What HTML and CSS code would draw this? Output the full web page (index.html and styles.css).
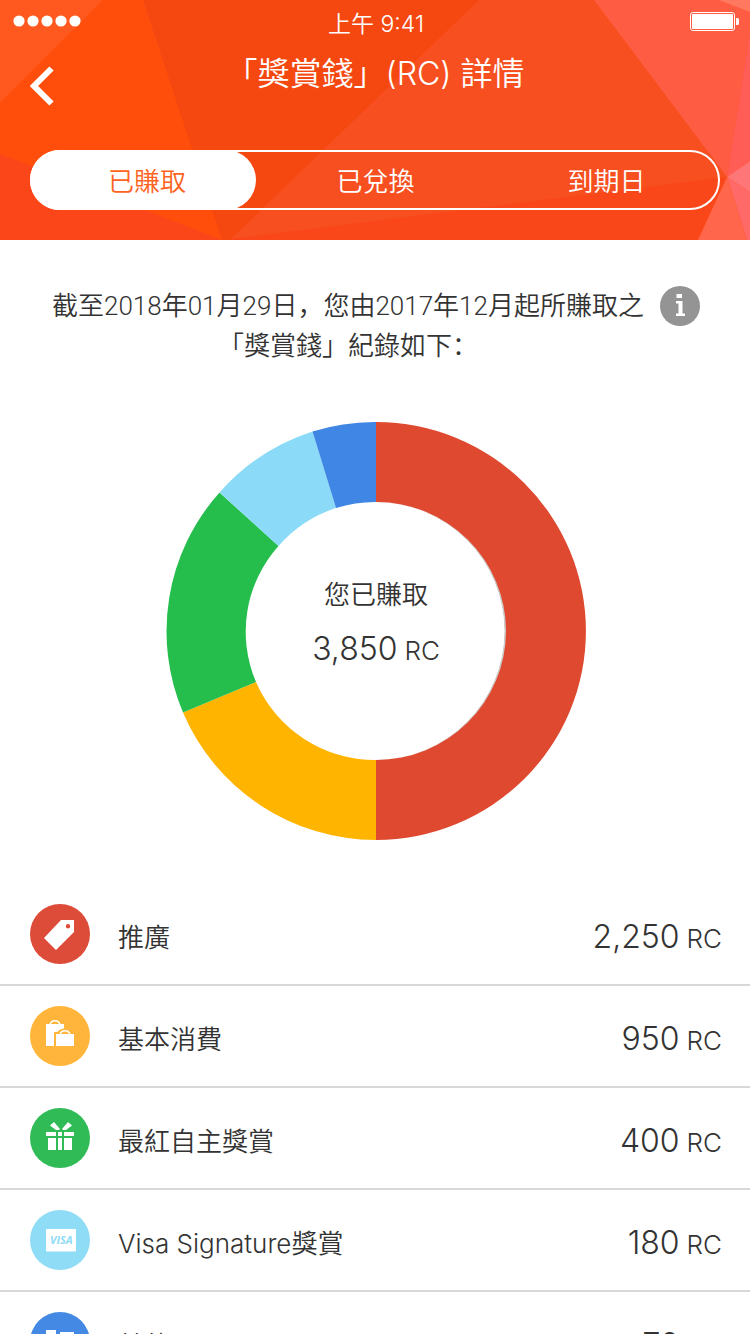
FILE: index.html
```html
<!DOCTYPE html>
<html lang="zh-Hant-HK">
<head>
<meta charset="utf-8">
<meta name="viewport" content="width=device-width, initial-scale=1">
<title>「獎賞錢」(RC) 詳情</title>
<link rel="stylesheet" href="styles.css">
</head>
<body>
<header class="header">
  <svg class="header-art" viewBox="0 0 750 240" preserveAspectRatio="none" aria-hidden="true">
    <rect width="750" height="240" fill="#ff4e0c"/>
    <path d="M0 0H103L0 103Z" fill="#ff591f"/>
    <path d="M0 154L222 240H0Z" fill="#fb4619"/>
    <path d="M143 0H479L230 240H222Z" fill="#f54811"/>
    <path d="M479 0H594L727 177L230 240Z" fill="#f74f20"/>
    <path d="M727 177L698 240H230V239Z" fill="#fa471a"/>
    <path d="M594 0H750V30L727 177Z" fill="#ff5c44"/>
    <path d="M719 0H750V12Z" fill="#ff7860"/>
    <path d="M750 30V161L727 177Z" fill="#ff5d55"/>
    <path d="M750 161V192L727 177Z" fill="#ff7678"/>
    <path d="M727 177L750 192V240H747Z" fill="#ff6a68"/>
    <path d="M727 177L747 240H698Z" fill="#ff664b"/>
  </svg>
  <div class="status">
    <svg class="signal" viewBox="0 0 68 12" fill="#fff" aria-hidden="true"><circle cx="6" cy="6" r="5.6"/><circle cx="20" cy="6" r="5.6"/><circle cx="34" cy="6" r="5.6"/><circle cx="48" cy="6" r="5.6"/><circle cx="62" cy="6" r="5.6"/></svg>
    <span class="time">上午 9:41</span>
    <svg class="battery" viewBox="0 0 49 19" fill="#fff" aria-hidden="true"><rect x=".5" y=".5" width="44" height="18" rx="2.5" fill="none" stroke="#fff"/><rect x="2" y="2" width="41" height="15" rx="1"/><path d="M46 6h1.500q1.500 0 1.500 1.500v4q0 1.500-1.500 1.500H46z"/></svg>
  </div>
  <div class="titlebar">
    <button class="back" type="button" aria-label="返回"><svg viewBox="0 0 24 40" aria-hidden="true"><path d="M21.500 2.500L4 20L21.500 37.500" fill="none" stroke="#fff" stroke-width="6"/></svg></button>
    <h1 class="title">「獎賞錢」(RC) 詳情</h1>
  </div>
  <nav class="tabs">
    <button class="tab tab-active" type="button">已賺取</button>
    <button class="tab" type="button">已兌換</button>
    <button class="tab" type="button">到期日</button>
  </nav>
</header>
<main>
  <div class="intro">
    <p class="intro-text">截至2018年01月29日<span lang="zh-Hans" class="punct">，</span>您由2017年12月起所賺取之<br>「獎賞錢」紀錄如下<span lang="zh-Hans" class="punct">：</span></p>
    <button class="info" type="button" aria-label="資訊"><svg viewBox="0 0 40 40" aria-hidden="true"><circle cx="20" cy="20" r="20" fill="#949494"/><path d="M16.500 8H22v4H16.500zM16 15h6.500V27.500H25V30H16v-2.500h2.500V17.500H16z" fill="#fff"/></svg></button>
  </div>
  <section class="chart">
    <svg class="donut" viewBox="0 0 420 418" aria-hidden="true">
      <path d="M210 0A210 209 0 0 1 210 418V338A129 129 0 0 0 210 80Z" fill="#df4930"/>
      <path d="M210 418A210 209 0 0 1 17 290.500L90 260A130 129 0 0 0 210 338Z" fill="#ffb400"/>
      <path d="M17 290.500A210 209 0 0 1 53.500 70.500L112.500 124A130 129 0 0 0 90 260Z" fill="#25bd4c"/>
      <path d="M53.500 70.500A210 209 0 0 1 146.500 9.500L170 86A130 129 0 0 0 112.500 124Z" fill="#8bdaf8"/>
      <path d="M146.500 9.500A210 209 0 0 1 210 0V80A130 129 0 0 0 170 86Z" fill="#4086e4"/>
      <path d="M210 80A130 129 0 0 1 210 338A128.500 129 0 0 0 210 80Z" fill="#ccc"/>
    </svg>
    <div class="total"><span class="total-label">您已賺取</span><span class="amount">3,850<small class="unit">RC</small></span></div>
  </section>
  <ul class="list">
    <li class="row">
      <svg class="icon" viewBox="0 0 60 60" aria-hidden="true"><circle cx="30" cy="30" r="30" fill="#dd4b39"/><path fill-rule="evenodd" d="M31 16H44V28L26 46L14 34ZM38 20a2.200 2.200 0 1 0 0 4.400 2.200 2.200 0 0 0 0-4.400Z" fill="#fff"/></svg>
      <span class="label">推廣</span><span class="amount">2,250<small class="unit">RC</small></span>
    </li>
    <li class="row">
      <svg class="icon" viewBox="0 0 60 60" aria-hidden="true"><circle cx="30" cy="30" r="30" fill="#ffb53c"/><path d="M16 18H34V22.500Q29 23 27.500 26H24V40H16ZM26 28H44V40H26Z" fill="#fff"/><path d="M20 18.500c1.500-5 8.500-5 10 0M30 28.500c1.500-5 8.500-5 10 0" fill="none" stroke="#fff" stroke-width="1.500"/></svg>
      <span class="label">基本消費</span><span class="amount">950<small class="unit">RC</small></span>
    </li>
    <li class="row">
      <svg class="icon" viewBox="0 0 60 60" aria-hidden="true"><circle cx="30" cy="30" r="30" fill="#30bb57"/><path d="M16 24H26V28H16ZM28 24H32V28H28ZM34 24H44V28H34ZM18 30H26V42H18ZM28 30H32V42H28ZM34 30H42V42H34ZM20 17.500L24 14L30 21L29 22H26ZM42 17.500L38 14L32 21L33 22H36Z" fill="#fff"/></svg>
      <span class="label">最紅自主獎賞</span><span class="amount">400<small class="unit">RC</small></span>
    </li>
    <li class="row">
      <svg class="icon" viewBox="0 0 60 60" aria-hidden="true"><circle cx="30" cy="30" r="30" fill="#8fdcf6"/><rect x="16" y="19" width="30" height="22.500" rx="1" fill="#fff"/><text x="20" y="34" class="card-brand">VISA</text></svg>
      <span class="label">Visa Signature獎賞</span><span class="amount">180<small class="unit">RC</small></span>
    </li>
    <li class="row">
      <svg class="icon" viewBox="0 0 60 60" aria-hidden="true"><circle cx="30" cy="30" r="30" fill="#4489e3"/><path d="M16 18H26V42H16ZM30 20H44V42H30Z" fill="#fff"/></svg>
      <span class="label">其他</span><span class="amount">70<small class="unit">RC</small></span>
    </li>
  </ul>
</main>
</body>
</html>
```
FILE: styles.css
```css
* { box-sizing: border-box; }
html { height: 100%; overflow: hidden; }
body {
  height: 100%;
  margin: 0;
  overflow: hidden;
  background: #fff;
  color: #333;
  font-family: Inter, "Noto Sans CJK TC", sans-serif;
  font-size: 26px;
  font-weight: 350;
}
button {
  margin: 0;
  padding: 0;
  border: 0;
  background: none;
  color: inherit;
  font: inherit;
}
svg { display: block; }
.header {
  position: relative;
  padding-bottom: 30px;
  color: #fff;
}
.header-art {
  position: absolute;
  inset: 0;
  z-index: -1;
  width: 100%;
  height: 100%;
}
.status {
  display: grid;
  grid-template-columns: 1fr auto 1fr;
  align-items: center;
  height: 40px;
  padding: 0 11px 0 13px;
}
.signal { width: 68px; height: 12px; }
.time { padding-top: 6px; font-size: 23px; line-height: 36px; }
.battery { justify-self: end; width: 49px; height: 19px; }
.titlebar {
  display: grid;
  grid-template-columns: 60px 1fr 60px;
  height: 110px;
  padding: 0 30px;
}
.back { justify-self: start; align-self: start; margin-top: 26px; }
.back svg { width: 24px; height: 40px; }
.title {
  margin: 10px 0 0;
  font-size: 32px;
  font-weight: 350;
  line-height: 48px;
  text-align: center;
  white-space: nowrap;
}
.tabs {
  display: grid;
  grid-template-columns: 33fr 34fr 34fr;
  height: 60px;
  margin: 0 30px;
  border: 2px solid #fff;
  border-radius: 30px;
}
.tab { padding: 4px 0 0 8px; line-height: 52px; }
.tab-active {
  margin: -2px 0 -2px -2px;
  border-radius: 30px;
  background: #fff;
  color: #ff6321;
}
.intro {
  display: flex;
  align-items: flex-start;
  justify-content: space-between;
  padding: 46px 50px 0 52px;
}
.intro-text {
  margin: 0;
  font-family: Roboto, "Noto Sans CJK TC", sans-serif;
  line-height: 40px;
  text-align: center;
}
.punct { font-family: "Noto Sans CJK SC", sans-serif; line-height: 1; }
.info svg { width: 40px; height: 40px; }
.chart {
  display: grid;
  place-items: center;
  padding: 56px 0 64px 2px;
}
.donut { grid-area: 1 / 1; width: 420px; height: 418px; }
.total {
  display: flex;
  grid-area: 1 / 1;
  flex-direction: column;
  align-items: center;
  padding-bottom: 14px;
}
.total-label { line-height: 44px; }
.list { margin: 0; padding: 0; list-style: none; }
.row {
  display: flex;
  align-items: center;
  height: 102px;
  padding: 0 28px 0 30px;
  border-bottom: 2px solid #d8d8d8;
}
.row:first-child { height: 82px; padding-bottom: 20px; }
.row .icon { flex: none; width: 60px; height: 60px; margin-right: 28px; }
.label { flex: 1; padding-top: 2px; }
.amount { padding-top: 8px; font-size: 32px; line-height: 48px; white-space: nowrap; }
.unit { margin-left: 7px; font-size: 26px; }
.card-brand {
  fill: #8fdcf6;
  font-family: "Open Sans", sans-serif;
  font-size: 11px;
  font-style: italic;
  font-weight: 700;
}
```
